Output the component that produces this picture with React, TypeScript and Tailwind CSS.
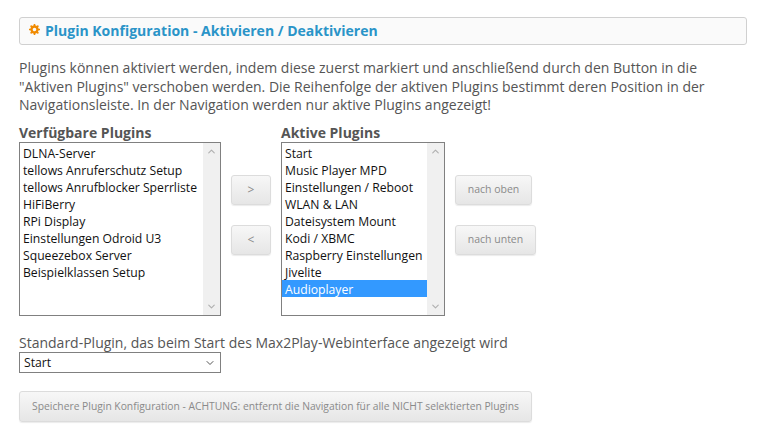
import { ChevronDown, ChevronUp } from 'lucide-react';

const availablePlugins = [
  'DLNA-Server',
  'tellows Anruferschutz Setup',
  'tellows Anrufblocker Sperrliste',
  'HiFiBerry',
  'RPi Display',
  'Einstellungen Odroid U3',
  'Squeezebox Server',
  'Beispielklassen Setup',
];

const activePlugins = [
  'Start',
  'Music Player MPD',
  'Einstellungen / Reboot',
  'WLAN & LAN',
  'Dateisystem Mount',
  'Kodi / XBMC',
  'Raspberry Einstellungen',
  'Jivelite',
  'Audioplayer',
];

function PluginList({ items, selected, className }: { items: string[]; selected?: string; className: string }) {
  return (
    <div className={`flex h-[174px] border border-[#808080] bg-white ${className}`}>
      <div className="min-w-0 flex-1 pt-[1px]">
        {items.map((item) => (
          <div
            key={item}
            className={`h-[17px] whitespace-nowrap pl-[3px] text-[12.2px] leading-[19px] ${item === selected ? 'bg-[#3399ff] text-white' : 'text-[#111]'}`}
          >
            {item}
          </div>
        ))}
      </div>
      <div className="flex w-[17px] flex-col items-center justify-between bg-[#f0f0f0] py-[3px] text-[#b0b0b0]">
        <ChevronUp size={11} strokeWidth={2.5} />
        <ChevronDown size={11} strokeWidth={2.5} />
      </div>
    </div>
  );
}

function GreyButton({ label, className }: { label: string; className: string }) {
  return (
    <button
      type="button"
      className={`h-[30px] rounded-[3px] border border-[#dcdcdc] bg-gradient-to-b from-[#f7f7f7] to-[#e6e6e6] text-[#8a8a8a] shadow-[0_1px_1px_rgba(0,0,0,0.08)] ${className}`}
    >
      {label}
    </button>
  );
}

export default function App() {
  return (
    <div className="h-[439px] w-[783px] overflow-hidden bg-white pl-[19px] pr-[36px] pt-[17px] font-['Open_Sans',sans-serif] text-[#555]">
      {/* Header */}
      <div className="flex h-[28px] items-center rounded-[3px] border border-[#d0d0d0] bg-[#fafafa] pl-[9px]">
        <svg width="11" height="11" viewBox="0 0 11 11" className="mb-[3px]">
          <circle cx="5.5" cy="5.5" r="3" fill="none" stroke="#f08a00" strokeWidth="2.4" />
          <path
            d="M5.5 0v2M5.5 9v2M0 5.5h2M9 5.5h2M1.6 1.6l1.4 1.4M8 8l1.4 1.4M1.6 9.4L3 8M8 3l1.4-1.4"
            stroke="#f08a00"
            strokeWidth="1.6"
          />
        </svg>
        <h1 className="ml-[5px] text-[14px] font-bold leading-[20px] text-[#2a94c8]">
          Plugin Konfiguration - Aktivieren / Deaktivieren
        </h1>
      </div>

      <p className="mt-[14px] text-[14px] leading-[18.5px]">
        Plugins können aktiviert werden, indem diese zuerst markiert und anschließend durch den Button in die
        <br />
        "Aktiven Plugins" verschoben werden. Die Reihenfolge der aktiven Plugins bestimmt deren Position in der
        <br />
        Navigationsleiste. In der Navigation werden nur aktive Plugins angezeigt!
      </p>

      {/* Plugin lists */}
      <div className="mt-[9px] flex">
        <div className="w-[202px]">
          <div className="text-[14px] font-bold leading-[18px]">Verfügbare Plugins</div>
          <PluginList items={availablePlugins} className="w-[202px]" />
        </div>
        <div className="ml-[10px] flex w-[40px] flex-col gap-[20px] pt-[51px]">
          <GreyButton label=">" className="w-[40px] text-[12px]" />
          <GreyButton label="<" className="w-[40px] text-[12px]" />
        </div>
        <div className="ml-[10px] w-[164px]">
          <div className="text-[14px] font-bold leading-[18px]">Aktive Plugins</div>
          <PluginList items={activePlugins} selected="Audioplayer" className="w-[164px]" />
        </div>
        <div className="ml-[10px] flex flex-col items-start gap-[20px] pt-[51px]">
          <GreyButton label="nach oben" className="w-[77px] text-[10.5px]" />
          <GreyButton label="nach unten" className="w-[81px] text-[10.5px]" />
        </div>
      </div>

      {/* Default plugin */}
      <div className="mt-[17px] text-[14px] leading-[19px]">
        Standard-Plugin, das beim Start des Max2Play-Webinterface angezeigt wird
      </div>
      <div className="flex h-[21px] w-[202px] items-center justify-between border border-[#808080] bg-white pl-[4px] pr-[4px] pt-[2px] text-[12.2px] text-[#111]">
        <span>Start</span>
        <ChevronDown size={12} className="text-[#555]" />
      </div>

      <GreyButton
        label="Speichere Plugin Konfiguration - ACHTUNG: entfernt die Navigation für alle NICHT selektierten Plugins"
        className="mt-[18px] block h-[31px] w-[513px] whitespace-nowrap pt-[1px] text-[10.3px]"
      />
    </div>
  );
}
